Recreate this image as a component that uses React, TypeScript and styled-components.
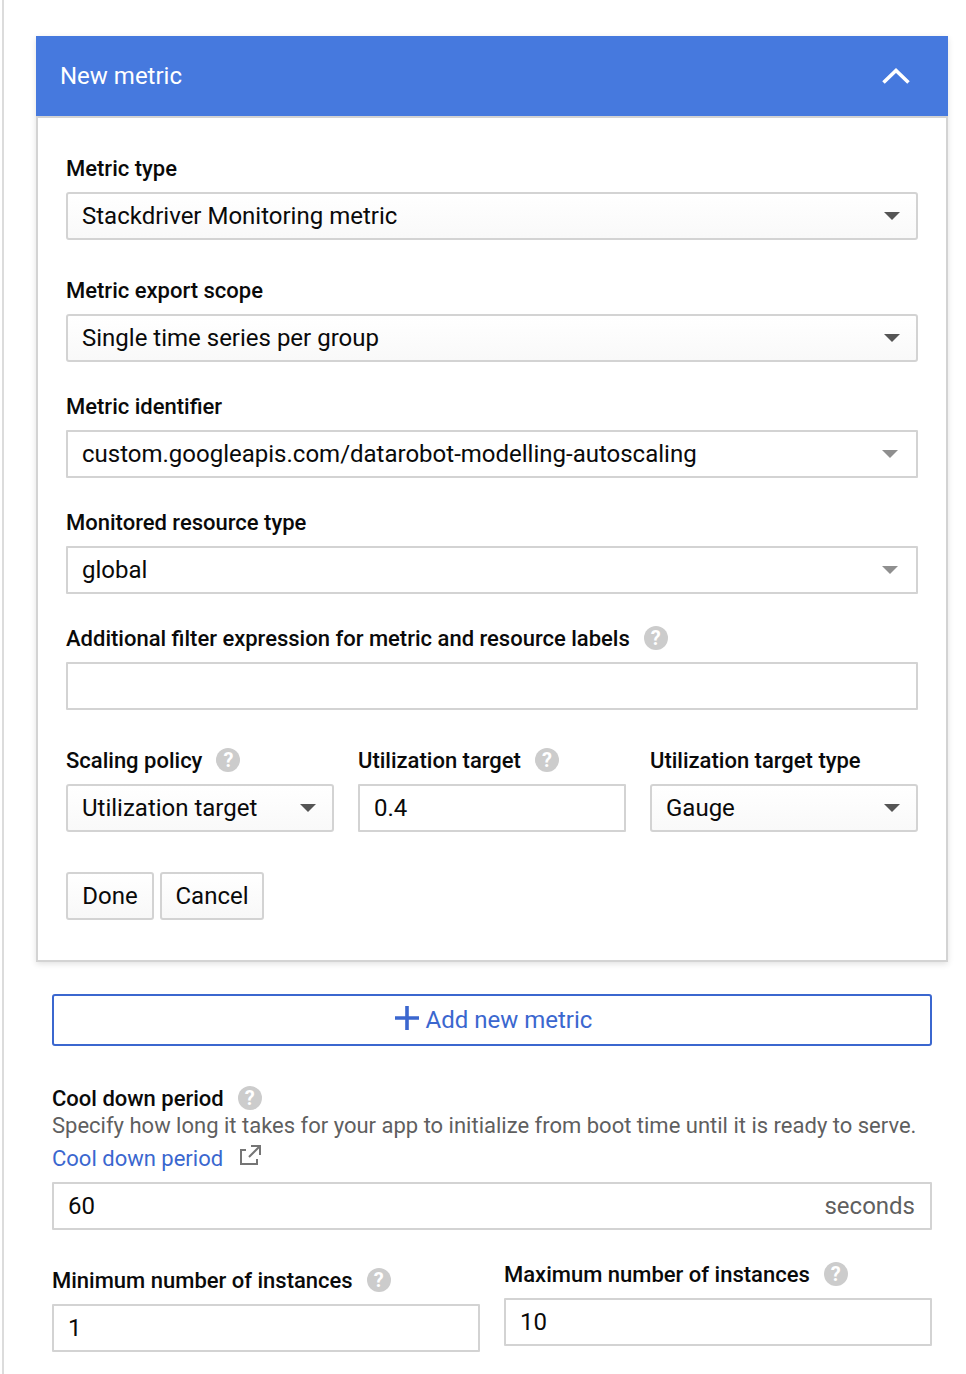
import styled, { createGlobalStyle } from 'styled-components';

const GlobalStyle = createGlobalStyle`
  html, body {
    margin: 0;
    padding: 0;
    background: #fff;
    height: 1374px;
    overflow: hidden;
  }
  * {
    box-sizing: border-box;
  }
  body {
    font-family: Roboto, "Liberation Sans", sans-serif;
  }
`;

const HelpIcon = ({ size = 24 }: { size?: number }) => (
  <HelpBadge $size={size}>?</HelpBadge>
);

const Caret = ({ muted }: { muted?: boolean }) => (
  <CaretIcon width="16" height="8" viewBox="0 0 16 8">
    <path d="M0 0H16L8 8Z" fill={muted ? '#8f8f8f' : '#555555'} />
  </CaretIcon>
);

const Select = ({ value, muted }: { value: string; muted?: boolean }) => (
  <SelectBox $muted={muted}>
    <span>{value}</span>
    <Caret muted={muted} />
  </SelectBox>
);

const App = () => {
  return (
    <Page>
      <GlobalStyle />
      <Panel>
        <PanelHeader>
          <PanelTitle>New metric</PanelTitle>
          <svg width="28" height="18" viewBox="0 0 28 18">
            <path d="M1.5 15.5L14 3.5L26.5 15.5" fill="none" stroke="#fff" strokeWidth="3.6" />
          </svg>
        </PanelHeader>
        <PanelBody>
          <Label>Metric type</Label>
          <Select value="Stackdriver Monitoring metric" />

          <Label $top={38}>Metric export scope</Label>
          <Select value="Single time series per group" />

          <Label $top={32}>Metric identifier</Label>
          <Select value="custom.googleapis.com/datarobot-modelling-autoscaling" muted />

          <Label $top={32}>Monitored resource type</Label>
          <Select value="global" muted />

          <Label $top={32}>
            Additional filter expression for metric and resource labels
            <HelpIcon />
          </Label>
          <TextInput />

          <ThreeColumns>
            <div>
              <Label>
                Scaling policy
                <HelpIcon />
              </Label>
              <Select value="Utilization target" />
            </div>
            <div>
              <Label>
                Utilization target
                <HelpIcon />
              </Label>
              <TextInput>0.4</TextInput>
            </div>
            <div>
              <Label>Utilization target type</Label>
              <Select value="Gauge" />
            </div>
          </ThreeColumns>

          <ButtonRow>
            <Button>Done</Button>
            <Button>Cancel</Button>
          </ButtonRow>
        </PanelBody>
      </Panel>

      <Lower>
        <AddButton>
          <PlusIcon width="24" height="24" viewBox="0 0 24 24">
            <path d="M0 12H24M12 0V24" stroke="#3b67cf" strokeWidth="3.6" fill="none" />
          </PlusIcon>
          Add new metric
        </AddButton>

        <Label $top={40}>
          Cool down period
          <HelpIcon />
        </Label>
        <Description>
          Specify how long it takes for your app to initialize from boot time until it is ready to serve.
        </Description>
        <LinkRow>
          <DocLink>Cool down period</DocLink>
          <ExternalIcon width="22" height="22" viewBox="0 0 22 22">
            <path
              d="M6 6H1V20H17V15M11 2H20V11M20 2L9 13"
              fill="none"
              stroke="#757575"
              strokeWidth="2"
            />
          </ExternalIcon>
        </LinkRow>
        <TextInput>
          60
          <Unit>seconds</Unit>
        </TextInput>

        <TwoColumns>
          <LowerColumn>
            <Label>
              Minimum number of instances
              <HelpIcon />
            </Label>
            <TextInput>1</TextInput>
          </LowerColumn>
          <LowerColumn $raised>
            <Label>
              Maximum number of instances
              <HelpIcon />
            </Label>
            <TextInput>10</TextInput>
          </LowerColumn>
        </TwoColumns>
      </Lower>
    </Page>
  );
};

export default App;

const Page = styled.div`
  width: 966px;
  height: 1374px;
  margin-left: 2px;
  padding: 36px 18px 0 32px;
  border-left: 2px solid #dcdcdc;
  overflow: hidden;
`;

const Panel = styled.div`
  width: 912px;
  box-shadow: 0 2px 6px rgba(0, 0, 0, 0.12);
`;

const PanelHeader = styled.div`
  height: 80px;
  padding: 0 38px 0 24px;
  background: #4679de;
  display: flex;
  align-items: center;
  justify-content: space-between;
`;

const PanelTitle = styled.div`
  font-size: 24px;
  color: #fff;
`;

const PanelBody = styled.div`
  height: 846px;
  padding: 38px 28px 0;
  background: #fff;
  border: 2px solid #d3d3d3;
  display: flex;
  flex-direction: column;
`;

const Label = styled.div<{ $top?: number }>`
  height: 24px;
  padding-top: 2px;
  margin-top: ${(p) => p.$top ?? 0}px;
  margin-bottom: 12px;
  display: flex;
  align-items: center;
  font-size: 22px;
  font-weight: 500;
  line-height: 24px;
  color: #0a0a0a;
  white-space: nowrap;
`;

const HelpBadge = styled.span<{ $size: number }>`
  flex: none;
  width: ${(p) => p.$size}px;
  height: ${(p) => p.$size}px;
  margin-top: -2px;
  margin-left: 14px;
  border-radius: 50%;
  background: #cccccc;
  color: #fff;
  display: inline-flex;
  align-items: center;
  justify-content: center;
  font-size: 20px;
  font-weight: 700;
`;

const SelectBox = styled.div<{ $muted?: boolean }>`
  height: 48px;
  padding: 0 ${(p) => (p.$muted ? 18 : 16)}px 0 14px;
  border: 2px solid #d3d3d3;
  border-radius: ${(p) => (p.$muted ? 1 : 3)}px;
  background: ${(p) => (p.$muted ? '#fff' : 'linear-gradient(#fff, #f9f9f9)')};
  display: flex;
  align-items: center;
  justify-content: space-between;
  font-size: 24px;
  color: #0a0a0a;
  white-space: nowrap;
`;

const CaretIcon = styled.svg`
  flex: none;
`;

const TextInput = styled.div`
  height: 48px;
  padding: 0 15px 0 14px;
  border: 2px solid #d3d3d3;
  border-radius: 1px;
  background: #fff;
  display: flex;
  align-items: center;
  justify-content: space-between;
  font-size: 24px;
  color: #0a0a0a;
`;

const ThreeColumns = styled.div`
  margin-top: 38px;
  display: grid;
  grid-template-columns: repeat(3, 268px);
  column-gap: 24px;
`;

const ButtonRow = styled.div`
  margin-top: 40px;
  display: flex;
  gap: 6px;
`;

const Button = styled.div`
  height: 48px;
  min-width: 88px;
  padding: 0 13.5px;
  border: 2px solid #d3d3d3;
  border-radius: 3px;
  background: linear-gradient(#fff, #f8f8f8);
  display: flex;
  align-items: center;
  justify-content: center;
  font-size: 24px;
  color: #0a0a0a;
`;

const Lower = styled.div`
  width: 880px;
  margin: 32px 0 0 16px;
`;

const AddButton = styled.div`
  height: 52px;
  padding-left: 3px;
  border: 2px solid #3b67cf;
  border-radius: 3px;
  display: flex;
  align-items: center;
  justify-content: center;
  gap: 7px;
  font-size: 24px;
  color: #3b67cf;
`;

const PlusIcon = styled.svg`
  margin-top: -4px;
`;

const Description = styled.div`
  margin-top: -12px;
  height: 32px;
  line-height: 32px;
  font-size: 22px;
  color: #5f5f5f;
  white-space: nowrap;
`;

const LinkRow = styled.div`
  height: 32px;
  margin-bottom: 8px;
  display: flex;
  align-items: center;
  gap: 17px;
`;

const DocLink = styled.span`
  font-size: 22px;
  color: #3b67cf;
`;

const ExternalIcon = styled.svg`
  margin-top: -6px;
`;

const Unit = styled.span`
  font-size: 24px;
  color: #5f5f5f;
`;

const TwoColumns = styled.div`
  margin-top: 38px;
  display: grid;
  grid-template-columns: 428px 428px;
  column-gap: 24px;
`;

const LowerColumn = styled.div<{ $raised?: boolean }>`
  margin-top: ${(p) => (p.$raised ? -6 : 0)}px;
`;
